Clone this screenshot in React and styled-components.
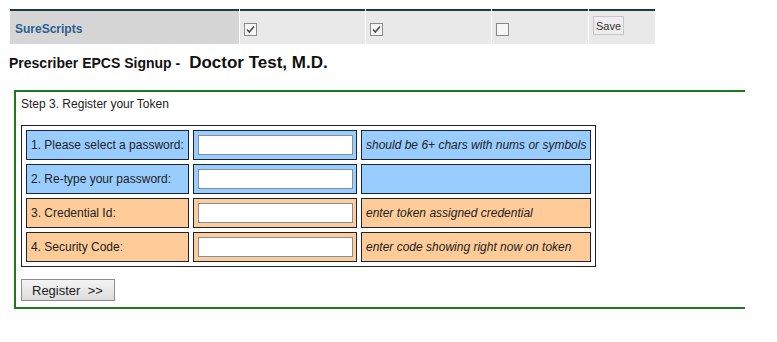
import React from "react";
import styled, { createGlobalStyle } from "styled-components";

const GlobalStyle = createGlobalStyle`
  body {
    margin: 0;
    background: #ffffff;
    font-family: "Liberation Sans", Arial, sans-serif;
    color: #222;
  }
`;

const Page = styled.div`
  padding-top: 9px;
`;

const TopBar = styled.div`
  display: grid;
  grid-template-columns: 229px 125px 125px 96px 66px;
  column-gap: 1px;
  margin-left: 10px;
  width: max-content;
`;

const TopCell = styled.div`
  height: 35px;
  border-top: 2px solid #1f3b40;
  background: ${({ dark }) => (dark ? "#d6d6d6" : "#e9e9e9")};
  display: flex;
  align-items: ${({ top }) => (top ? "flex-start" : "center")};
  padding: ${({ top }) => (top ? "5px 4px 0" : "3px 4px 0")};
  box-sizing: border-box;
`;

const SiteName = styled.span`
  font-size: 12px;
  font-weight: bold;
  color: #2b5f8e;
  padding-left: 1px;
`;

const Box = styled.span`
  width: 13px;
  height: 13px;
  box-sizing: border-box;
  border: 1px solid #8a8a8a;
  background: #f6f6f6;
  display: flex;
  align-items: center;
  justify-content: center;
`;

const SmallButton = styled.button`
  font-family: "Liberation Sans", Arial, sans-serif;
  font-size: 11px;
  color: #333;
  height: 19px;
  width: 31px;
  padding: 0;
  background: #ededed;
  border: 1px solid #c6c6c6;
`;

const Heading = styled.div`
  display: flex;
  align-items: baseline;
  gap: 9px;
  margin: 9px 0 0 9px;
  line-height: 20px;
  color: #111;
`;

const Lead = styled.span`
  font-size: 14px;
  font-weight: bold;
`;

const Doctor = styled.span`
  font-size: 17px;
  font-weight: bold;
`;

const Panel = styled.div`
  margin: 17px 0 0 14px;
  width: 724px;
  border-top: 2px solid #1c7a1c;
  border-left: 2px solid #1c7a1c;
  border-bottom: 2px solid #1c7a1c;
  padding: 5px 0 6px 5px;
`;

const StepTitle = styled.div`
  font-size: 12px;
  line-height: 14px;
  color: #222;
`;

const FormGrid = styled.div`
  display: grid;
  grid-template-columns: 163px 164px 230px;
  grid-auto-rows: 30px;
  gap: 4px;
  padding: 4px;
  border: 1px solid #222;
  width: max-content;
  margin-top: 14px;
`;

const Cell = styled.div`
  box-sizing: border-box;
  border: 1px solid #1c2430;
  background: ${({ tone }) => (tone === "blue" ? "#99ccff" : "#ffcc99")};
  display: flex;
  align-items: center;
  padding: 0 4px;
  font-size: 12px;
  font-style: ${({ hint }) => (hint ? "italic" : "normal")};
  color: #222;
  white-space: nowrap;
`;

const TextBox = styled.input`
  width: 155px;
  height: 20px;
  box-sizing: border-box;
  border: 1px solid #858f99;
  background: #fff;
  padding: 0 2px;
  font-size: 12px;
  outline: none;
`;

const RegisterButton = styled.button`
  margin-top: 12px;
  width: 94px;
  height: 22px;
  padding: 0 0 0 10px;
  text-align: left;
  font-family: "Liberation Sans", Arial, sans-serif;
  font-size: 13px;
  color: #222;
  background: linear-gradient(#f4f4f4, #dcdcdc);
  border: 1px solid #8c8c8c;
  display: block;
`;

const Check = ({ checked }) => (
  <Box>
    {checked && (
      <svg width="11" height="11" viewBox="0 0 11 11">
        <path d="M2 5.5 L4.3 8 L9 2.5" fill="none" stroke="#4d4d4d" strokeWidth="1.6" />
      </svg>
    )}
  </Box>
);

const rows = [
  { label: "1. Please select a password:", hint: "should be 6+ chars with nums or symbols", tone: "blue" },
  { label: "2. Re-type your password:", hint: "", tone: "blue" },
  { label: "3. Credential Id:", hint: "enter token assigned credential", tone: "orange" },
  { label: "4. Security Code:", hint: "enter code showing right now on token", tone: "orange" },
];

const App = () => {
  return (
    <Page>
      <GlobalStyle />
      <TopBar>
        <TopCell dark>
          <SiteName>SureScripts</SiteName>
        </TopCell>
        <TopCell>
          <Check checked />
        </TopCell>
        <TopCell>
          <Check checked />
        </TopCell>
        <TopCell>
          <Check />
        </TopCell>
        <TopCell top>
          <SmallButton>Save</SmallButton>
        </TopCell>
      </TopBar>

      <Heading>
        <Lead>Prescriber EPCS Signup -</Lead>
        <Doctor>Doctor Test, M.D.</Doctor>
      </Heading>

      <Panel>
        <StepTitle>Step 3. Register your Token</StepTitle>
        <FormGrid>
          {rows.map((row, index) => (
            <React.Fragment key={index}>
              <Cell tone={row.tone}>{row.label}</Cell>
              <Cell tone={row.tone}>
                <TextBox type={index < 2 ? "password" : "text"} />
              </Cell>
              <Cell tone={row.tone} hint>
                {row.hint}
              </Cell>
            </React.Fragment>
          ))}
        </FormGrid>
        <RegisterButton>Register&nbsp; &gt;&gt;</RegisterButton>
      </Panel>
    </Page>
  );
};

export default App;
